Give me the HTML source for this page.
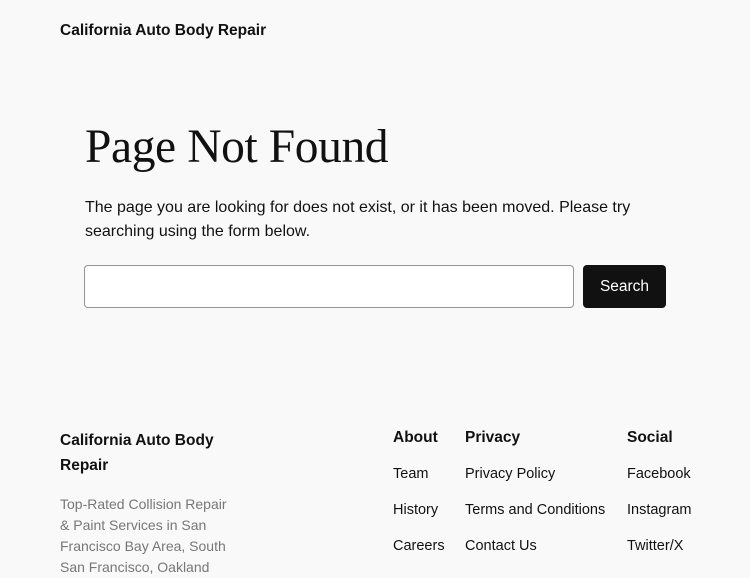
<!DOCTYPE html>
<html><head><meta charset="utf-8"><style>
*{margin:0;padding:0;box-sizing:border-box}
html,body{width:750px;height:563px;overflow:hidden;background:#f9f9f9;color:#111;font-family:"Liberation Sans",sans-serif}
.a{position:absolute;white-space:nowrap}
.site{left:60px;top:22px;font-size:15.5px;font-weight:bold}
h1{position:absolute;left:85px;top:120px;font-family:"Liberation Serif",serif;font-weight:normal;font-size:47.5px;letter-spacing:-0.4px}
.p{left:85px;top:196px;font-size:16px;line-height:24px}
.in{position:absolute;left:84px;top:265px;width:490px;height:43px;border:1px solid #949494;border-radius:4px;background:#fff}
.btn{position:absolute;left:583px;top:265px;width:83px;height:43px;background:#111;color:#fff;border-radius:4px;font-size:15.5px;text-align:center;line-height:43px}
.fb{left:60px;top:428px;font-size:15.5px;font-weight:bold;line-height:25px}
.fd{left:60px;top:494px;font-size:14px;line-height:21px;color:#777}
.h{font-size:15.5px;font-weight:bold;top:429px}
.l{font-size:14.5px}
</style></head><body>
<div class="a site">California Auto Body Repair</div>
<h1>Page Not Found</h1>
<div class="a p">The page you are looking for does not exist, or it has been moved. Please try<br>searching using the form below.</div>
<div class="in"></div>
<div class="btn">Search</div>
<div class="a fb">California Auto Body<br>Repair</div>
<div class="a fd">Top-Rated Collision Repair<br>&amp; Paint Services in San<br>Francisco Bay Area, South<br>San Francisco, Oakland</div>
<div class="a h" style="left:393px">About</div>
<div class="a h" style="left:465px">Privacy</div>
<div class="a h" style="left:627px">Social</div>
<div class="a l" style="left:393px;top:466px">Team</div>
<div class="a l" style="left:393px;top:502px">History</div>
<div class="a l" style="left:393px;top:538px">Careers</div>
<div class="a l" style="left:465px;top:466px">Privacy Policy</div>
<div class="a l" style="left:465px;top:502px">Terms and Conditions</div>
<div class="a l" style="left:465px;top:538px">Contact Us</div>
<div class="a l" style="left:627px;top:466px">Facebook</div>
<div class="a l" style="left:627px;top:502px">Instagram</div>
<div class="a l" style="left:627px;top:538px">Twitter/X</div>
</body></html>
